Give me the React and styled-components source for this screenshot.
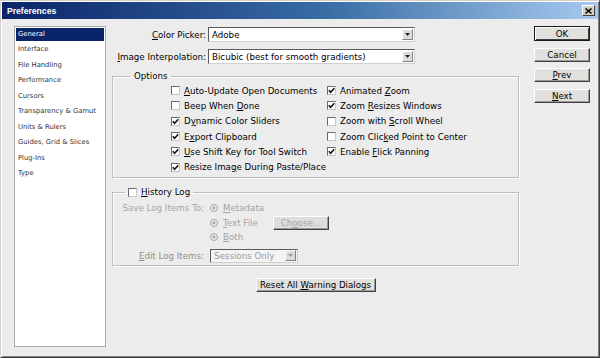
import React from 'react';
import styled, { createGlobalStyle } from 'styled-components';

const GlobalStyle = createGlobalStyle`
  html, body {
    margin: 0;
    padding: 0;
    overflow: hidden;
    background: #ececec;
  }
  body {
    font-family: 'DejaVu Sans', 'Noto Sans', sans-serif;
  }
`;

const navItems = [
  'General',
  'Interface',
  'File Handling',
  'Performance',
  'Cursors',
  'Transparency & Gamut',
  'Units & Rulers',
  'Guides, Grid & Slices',
  'Plug-Ins',
  'Type',
];

const leftOptions = [
  { on: false, label: <><u>A</u>uto-Update Open Documents</> },
  { on: false, label: <>Beep When <u>D</u>one</> },
  { on: true, label: <>D<u>y</u>namic Color Sliders</> },
  { on: true, label: <>E<u>x</u>port Clipboard</> },
  { on: true, label: <><u>U</u>se Shift Key for Tool Switch</> },
  { on: true, label: <>Resize Ima<u>g</u>e During Paste/Place</> },
];

const rightOptions = [
  { on: true, label: <>Animated <u>Z</u>oom</> },
  { on: true, label: <>Zoom <u>R</u>esizes Windows</> },
  { on: false, label: <>Zoom with <u>S</u>croll Wheel</> },
  { on: false, label: <>Zoom Clic<u>k</u>ed Point to Center</> },
  { on: true, label: <>Enable <u>F</u>lick Panning</> },
];

const Checkbox = ({ checked }) => (
  <Box>
    {checked && (
      <svg width="7" height="7" viewBox="0 0 7 7">
        <path d="M0.8 3.2 L2.6 5.2 L6.3 1.2" fill="none" stroke="#111" strokeWidth="1.6" />
      </svg>
    )}
  </Box>
);

const Radio = () => (
  <RadioDot>
    <svg width="8" height="8" viewBox="0 0 8 8">
      <circle cx="4" cy="4" r="3.5" fill="#ececec" stroke="#a4a4a4" />
      <circle cx="4" cy="4" r="1.4" fill="#a4a4a4" />
    </svg>
  </RadioDot>
);

const Arrow = ({ disabled }) => (
  <ArrowBtn>
    <svg width="5" height="3" viewBox="0 0 5 3">
      <path d="M0 0 H5 L2.5 3 Z" fill={disabled ? '#9a9a9a' : '#222'} />
    </svg>
  </ArrowBtn>
);

const App = () => {
  return (
    <>
      <GlobalStyle />
      <Window>
        <TitleBar>
          <Title>Preferences</Title>
          <CloseBtn>
            <svg width="7" height="6" viewBox="0 0 7 6">
              <path d="M0.5 0.5 L6.5 5.5 M6.5 0.5 L0.5 5.5" stroke="#000" strokeWidth="1.5" />
            </svg>
          </CloseBtn>
        </TitleBar>
        <Body>
          <Sidebar>
            {navItems.map((item, i) => (
              <NavItem key={item} $active={i === 0}>
                {item}
              </NavItem>
            ))}
          </Sidebar>

          <Main>
            <FieldRow>
              <FieldLabel>
                <u>C</u>olor Picker:
              </FieldLabel>
              <Select $width={207}>
                <span>Adobe</span>
                <Arrow />
              </Select>
            </FieldRow>
            <FieldRow>
              <FieldLabel>
                <u>I</u>mage Interpolation:
              </FieldLabel>
              <Select $width={207}>
                <span>Bicubic (best for smooth gradients)</span>
                <Arrow />
              </Select>
            </FieldRow>

            <Group $top={7}>
              <Legend $offset={14}>Options</Legend>
              <OptionsGrid>
                <OptionCol>
                  {leftOptions.map((o, i) => (
                    <Option key={i}>
                      <Checkbox checked={o.on} />
                      <span>{o.label}</span>
                    </Option>
                  ))}
                </OptionCol>
                <OptionCol>
                  {rightOptions.map((o, i) => (
                    <Option key={i}>
                      <Checkbox checked={o.on} />
                      <span>{o.label}</span>
                    </Option>
                  ))}
                </OptionCol>
              </OptionsGrid>
            </Group>

            <Group $top={7}>
              <Legend $offset={8}>
                <Option as="span">
                  <Checkbox checked={false} />
                  <span>
                    <u>H</u>istory Log
                  </span>
                </Option>
              </Legend>
              <LogGrid>
                <LogLabel>Save Log Items To:</LogLabel>
                <RadioList>
                  <RadioRow>
                    <Radio />
                    <Dim>
                      <u>M</u>etadata
                    </Dim>
                  </RadioRow>
                  <RadioRow>
                    <Radio />
                    <Dim>
                      <u>T</u>ext File
                    </Dim>
                    <Button $width={56} $disabled>
                      <span>
                        Ch<u>o</u>ose...
                      </span>
                    </Button>
                  </RadioRow>
                  <RadioRow>
                    <Radio />
                    <Dim>
                      <u>B</u>oth
                    </Dim>
                  </RadioRow>
                </RadioList>
                <LogLabel $edit>
                  <u>E</u>dit Log Items:
                </LogLabel>
                <EditCell>
                  <Select $width={88} $disabled>
                    <span>Sessions Only</span>
                    <Arrow disabled />
                  </Select>
                </EditCell>
              </LogGrid>
            </Group>

            <ResetRow>
              <Button $width={120}>
                <span>
                  Reset All <u>W</u>arning Dialogs
                </span>
              </Button>
            </ResetRow>
          </Main>

          <Actions>
            <Button $width={56} $default>
              OK
            </Button>
            <Button $width={56}>Cancel</Button>
            <Button $width={56}>
              <span>
                <u>P</u>rev
              </span>
            </Button>
            <Button $width={56}>
              <span>
                <u>N</u>ext
              </span>
            </Button>
          </Actions>
        </Body>
      </Window>
    </>
  );
};

const Window = styled.div`
  box-sizing: border-box;
  width: 600px;
  height: 358px;
  display: flex;
  flex-direction: column;
  padding: 1px;
  border: 1px solid;
  border-color: #d4d0c8 #404040 #404040 #d4d0c8;
  box-shadow: inset 1px 1px #fff, inset -1px -1px #808080;
  background: #ececec;
  color: #000;
`;

const TitleBar = styled.div`
  height: 17px;
  display: flex;
  align-items: center;
  justify-content: space-between;
  padding: 0 3px 0 5px;
  background: linear-gradient(90deg, #0a246a 0%, #3a6ea5 55%, #a6caf0 100%);
`;

const Title = styled.span`
  font-family: 'Liberation Sans', Arial, sans-serif;
  font-weight: bold;
  font-size: 8.6px;
  color: #fff;
`;

const CloseBtn = styled.div`
  box-sizing: border-box;
  width: 13px;
  height: 11px;
  display: flex;
  align-items: center;
  justify-content: center;
  background: #d4d0c8;
  border: 1px solid;
  border-color: #fff #404040 #404040 #fff;
`;

const Body = styled.div`
  flex: 1;
  display: flex;
  gap: 6px;
  padding: 7px 8px 9px 12px;
  min-height: 0;
`;

const Sidebar = styled.div`
  box-sizing: border-box;
  width: 92px;
  display: flex;
  flex-direction: column;
  gap: 2.45px;
  padding: 1px 1px 0;
  background: #fff;
  border: 1px solid #a8a8a8;
`;

const NavItem = styled.div`
  height: 13px;
  line-height: 13px;
  padding-left: 2px;
  font-size: 6.8px;
  white-space: nowrap;
  color: ${(p) => (p.$active ? '#fff' : '#333')};
  background: ${(p) => (p.$active ? '#0a246a' : 'transparent')};
`;

const Main = styled.div`
  width: 407px;
  display: flex;
  flex-direction: column;
  padding-top: 1px;
  font-size: 8.7px;
`;

const FieldRow = styled.div`
  display: flex;
  align-items: center;
  gap: 2px;
  height: 15px;
  & + & {
    margin-top: 7px;
  }
`;

const FieldLabel = styled.span`
  width: 94px;
  text-align: right;
  white-space: nowrap;
`;

const Select = styled.div`
  box-sizing: border-box;
  width: ${(p) => p.$width}px;
  height: ${(p) => (p.$disabled ? 14 : 15)}px;
  display: flex;
  align-items: center;
  justify-content: space-between;
  padding: 0 1px 0 3px;
  background: ${(p) => (p.$disabled ? '#f4f4f4' : '#fff')};
  border: 1px solid;
  border-color: #5a5a5a #d0d0d0 #d0d0d0 #5a5a5a;
  color: ${(p) => (p.$disabled ? '#9a9a9a' : '#000')};
  white-space: nowrap;
`;

const ArrowBtn = styled.span`
  box-sizing: border-box;
  width: 11px;
  height: 11px;
  display: flex;
  align-items: center;
  justify-content: center;
  background: #dcdcdc;
  border: 1px solid;
  border-color: #fff #808080 #808080 #fff;
`;

const Group = styled.fieldset`
  margin: ${(p) => p.$top}px 0 0;
  padding: 2px 4px 2px 4px;
  border: 1px solid #bdbdbd;
  box-shadow: 1px 1px 0 #fff, inset 1px 1px 0 #fff;
  min-width: 0;
`;

const Legend = styled.legend`
  margin-left: ${(p) => p.$offset}px;
  padding: 0 3px;
  line-height: 10px;
`;

const OptionsGrid = styled.div`
  display: grid;
  grid-template-columns: 156px auto;
  padding-left: 54px;
`;

const OptionCol = styled.div`
  display: flex;
  flex-direction: column;
`;

const Option = styled.label`
  display: flex;
  align-items: center;
  gap: 4px;
  height: 15.3px;
  white-space: nowrap;
`;

const Box = styled.span`
  box-sizing: border-box;
  width: 9px;
  height: 9px;
  display: inline-flex;
  align-items: center;
  justify-content: center;
  flex-shrink: 0;
  background: #fff;
  border: 1px solid;
  border-color: #6a6a6a #c8c8c8 #c8c8c8 #6a6a6a;
`;

const LogGrid = styled.div`
  display: grid;
  grid-template-columns: 87px auto;
  column-gap: 6px;
  margin-top: -1px;
`;

const LogLabel = styled.span`
  text-align: right;
  color: ${(p) => (p.$edit ? '#8c8c8c' : '#a4a4a4')};
  line-height: 14.3px;
  margin-top: ${(p) => (p.$edit ? 5 : 0)}px;
  white-space: nowrap;
`;

const RadioList = styled.div`
  display: flex;
  flex-direction: column;
`;

const RadioRow = styled.div`
  display: flex;
  align-items: center;
  gap: 5px;
  height: 14.3px;
  white-space: nowrap;
`;

const RadioDot = styled.span`
  display: inline-flex;
  flex-shrink: 0;
`;

const Dim = styled.span`
  color: #a4a4a4;
`;

const EditCell = styled.div`
  margin-top: 5px;
`;

const Button = styled.div`
  box-sizing: border-box;
  width: ${(p) => p.$width}px;
  height: ${(p) => (p.$default ? 15 : 14)}px;
  display: flex;
  align-items: center;
  justify-content: center;
  font-size: 8.7px;
  white-space: nowrap;
  color: ${(p) => (p.$disabled ? '#a4a4a4' : '#000')};
  background: ${(p) => (p.$disabled ? '#dedede' : '#e2e0dc')};
  border: 1px solid;
  border-color: ${(p) => (p.$default ? '#1a1a1a' : '#fff #404040 #404040 #fff')};
  box-shadow: ${(p) =>
    p.$default
      ? 'inset 1px 1px #fff, inset -1px -1px #404040'
      : 'inset -1px -1px #9a9a9a'};
  margin-left: ${(p) => (p.$disabled ? 10 : 0)}px;
`;

const ResetRow = styled.div`
  display: flex;
  justify-content: center;
  margin-top: 12px;
`;

const Actions = styled.div`
  display: flex;
  flex-direction: column;
  gap: 6.5px;
  margin-left: 9px;
  font-size: 8.7px;
`;

export default App;
